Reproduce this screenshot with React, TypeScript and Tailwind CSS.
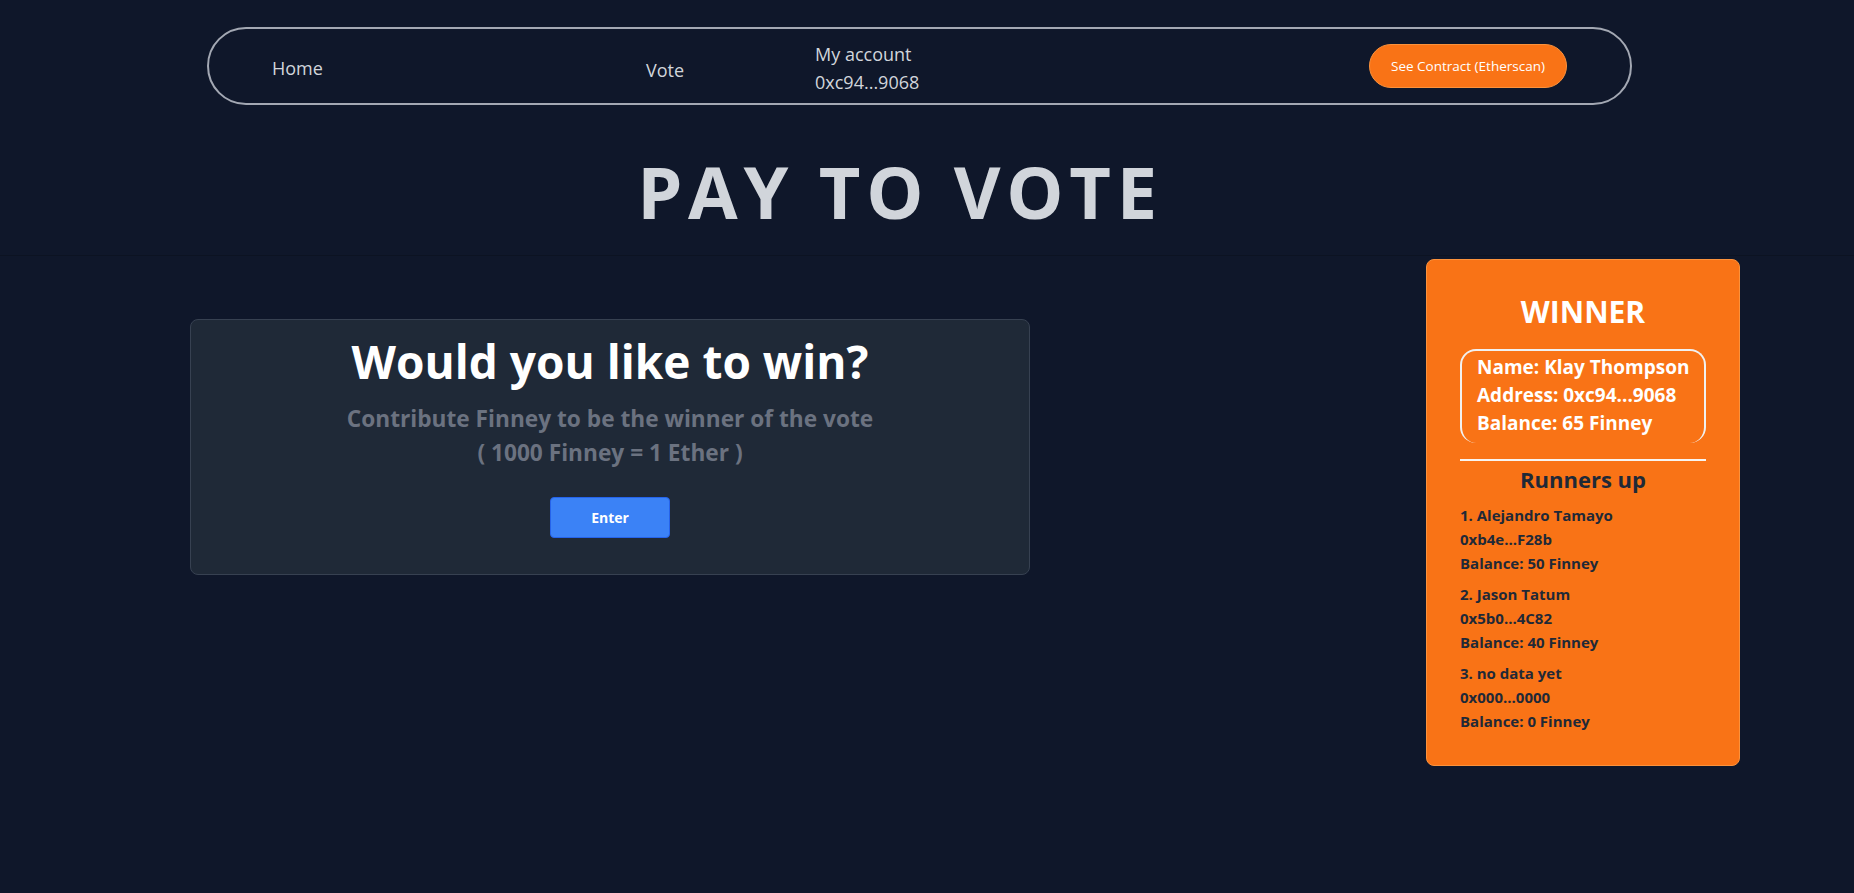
import React from "react";

const runners = [
  { n: "1. Alejandro Tamayo", a: "0xb4e...F28b", b: "Balance: 50 Finney" },
  { n: "2. Jason Tatum", a: "0x5b0...4C82", b: "Balance: 40 Finney" },
  { n: "3. no data yet", a: "0x000...0000", b: "Balance: 0 Finney" },
];

export default function App() {
  return (
    <div className="min-h-screen bg-[#0f172a] font-['Open_Sans','Noto_Sans',sans-serif]">
      <header className="pt-[27px] pb-[28px] border-b border-[#0c1322]">
        <nav className="ml-[207px] w-[1425px] h-[78px] rounded-full border-2 border-[#a3a8b3] flex items-center text-[#d1d5db] text-lg">
          <div className="pl-[63px] w-[437px] pt-[4px]">Home</div>
          <div className="w-[169px] pt-[8px]">Vote</div>
          <div className="leading-7 pt-[3px]">
            <div>My account</div>
            <div>0xc94...9068</div>
          </div>
          <button className="ml-auto mr-[63px] h-[44px] w-[198px] rounded-full bg-[#f97316] border border-[#fb923c] text-white text-[13.5px]">
            See Contract (Etherscan)
          </button>
        </nav>
        <h1 className="mt-[50px] text-center pr-[54px] text-[72px] leading-none font-bold tracking-[0.08em] text-[#d1d5db]">
          PAY TO VOTE
        </h1>
      </header>
      <main className="flex items-start">
        <section className="ml-[190px] mt-[63px] w-[840px] bg-[#1f2937] border border-[#374151] rounded-lg flex flex-col items-center pt-[11px] pb-[36px]">
          <h2 className="text-[46px] leading-[60px] font-bold text-white">Would you like to win?</h2>
          <p className="mt-[11px] text-[22.7px] leading-[34px] font-bold text-[#6b7280] text-center">
            Contribute Finney to be the winner of the vote
            <br />( 1000 Finney = 1 Ether )
          </p>
          <button className="mt-[27px] w-[120px] h-[41px] bg-[#3b82f6] border border-[#2563eb] rounded text-white text-sm font-bold">
            Enter
          </button>
        </section>
        <aside className="ml-auto mr-[114px] mt-[3px] w-[314px] bg-[#f97316] border border-[#fb923c] rounded-lg px-[33px] pt-[34px] pb-[32px]">
          <h3 className="text-center text-[30px] leading-9 font-bold text-white">WINNER</h3>
          <div className="mt-[19px] border-2 border-b-0 border-[#f1f1f1] rounded-2xl pl-[15px] pt-[2px] pb-[6px] text-white text-[19px] leading-7 font-bold">
            <div>Name: Klay Thompson</div>
            <div>Address: 0xc94...9068</div>
            <div>Balance: 65 Finney</div>
          </div>
          <div className="mt-[16px] h-[2px] bg-[#f8f4f0]" />
          <h4 className="mt-[2px] text-center text-[22px] leading-8 font-bold text-[#1f2937]">Runners up</h4>
          <div className="mt-[8px] flex flex-col gap-[7px] text-[15px] leading-6 font-bold text-[#1f2937]">
            {runners.map((r) => (
              <div key={r.n}>
                <div>{r.n}</div>
                <div>{r.a}</div>
                <div>{r.b}</div>
              </div>
            ))}
          </div>
        </aside>
      </main>
    </div>
  );
}
